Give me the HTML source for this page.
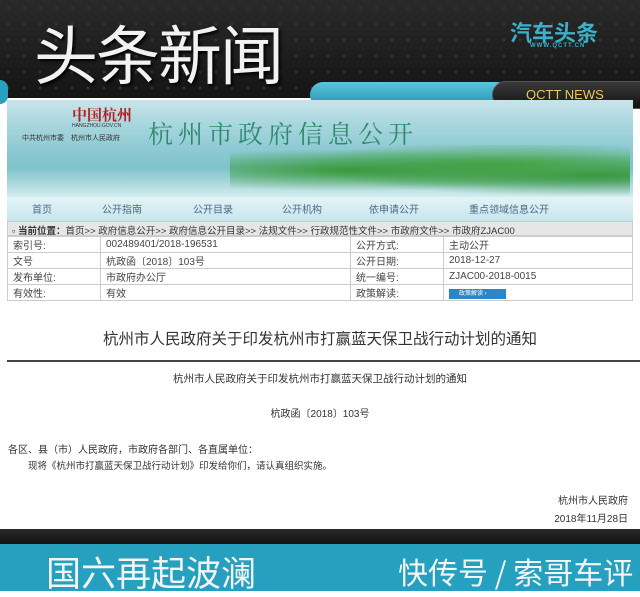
<!DOCTYPE html><html><head><meta charset="utf-8"><style>
*{margin:0;padding:0;box-sizing:border-box}
body{width:640px;height:591px;overflow:hidden;background:#fff;position:relative;font-family:"Liberation Sans","Noto Sans CJK SC",sans-serif;color:#333}
.a{position:absolute;white-space:nowrap}
.top{left:0;top:0;width:640px;height:98px;background:radial-gradient(#3a3a3a 1px,transparent 1.5px) 0 0/16px 16px,linear-gradient(#2a2a2a,#151515)}
.t td{border:1px solid #ccc;font-size:10px;padding-left:5px;height:16px;color:#444}
</style></head><body>
<div class="a top"></div>
<div class="a" style="left:0;top:80px;width:8px;height:24px;background:#2aa0c0;border-radius:0 10px 10px 0"></div>
<div class="a" style="left:34px;top:6px;font-size:64px;color:#f2f2f2;letter-spacing:-2px;font-family:'Noto Sans CJK SC',sans-serif;text-shadow:2px 2px 3px #000">头条新闻</div>
<div class="a" style="left:510px;top:16px;font-size:22px;color:#3cb0c8;font-weight:bold">汽车头条</div>
<div class="a" style="left:530px;top:43px;font-size:6px;color:#3cb0c8;font-weight:bold;letter-spacing:1px">WWW.QCTT.CN</div>
<div class="a" style="left:310px;top:82px;width:200px;height:26px;background:linear-gradient(#5cc6de,#1f8fac);border-radius:13px"></div>
<div class="a" style="left:492px;top:81px;width:150px;height:28px;background:linear-gradient(#3a3a3a,#111);border-radius:14px 0 0 14px;border:1px solid #555"></div>
<div class="a" style="left:526px;top:87px;font-size:13px;color:#e8c860">QCTT NEWS</div>
<div class="a" style="left:7px;top:100px;width:626px;height:97px;background:linear-gradient(180deg,#c8e4ea 0%,#a9d6de 25%,#8ecad4 50%,#7ec3c9 70%,#d4ecef 100%)"></div>
<div class="a" style="left:230px;top:145px;width:400px;height:50px;background:radial-gradient(ellipse at 30% 50%,#3a9a3a,transparent 60%),radial-gradient(ellipse at 70% 40%,#4aa84a,transparent 55%),radial-gradient(ellipse at 90% 60%,#2e8e3a,transparent 50%)"></div>
<div class="a" style="left:72px;top:104px;font-size:15px;color:#b02020;font-family:'Noto Serif CJK SC',serif;font-weight:bold">中国杭州</div>
<div class="a" style="left:72px;top:123px;font-size:5px;color:#333">HANGZHOU.GOV.CN</div>
<div class="a" style="left:22px;top:133px;font-size:7px;color:#333">中共杭州市委　杭州市人民政府</div>
<div class="a" style="left:148px;top:115px;font-size:25px;color:#2e8a6e;font-family:'Noto Serif CJK SC',serif;letter-spacing:5px">杭州市政府信息公开</div>
<div class="a" style="left:7px;top:197px;width:626px;height:24px;background:linear-gradient(#e4f4f6,#c6e6ec)"></div>
<div class="a" style="top:201px;font-size:10px;color:#4a6a86;left:0;width:640px">
<span class="a" style="left:32px">首页</span><span class="a" style="left:102px">公开指南</span><span class="a" style="left:193px">公开目录</span><span class="a" style="left:282px">公开机构</span><span class="a" style="left:369px">依申请公开</span><span class="a" style="left:469px">重点领域信息公开</span></div>
<div class="a" style="left:7px;top:221px;width:626px;height:15px;background:#e6e6e6;border:1px solid #ccc;font-size:9.5px;padding:1px 0 0 4px;color:#333">▫ <b>当前位置：</b>首页>> 政府信息公开>> 政府信息公开目录>> 法规文件>> 行政规范性文件>> 市政府文件>> 市政府ZJAC00</div>
<table class="a t" style="left:7px;top:236px;width:626px;border-collapse:collapse">
<tr><td style="width:93px">索引号:</td><td style="width:250px">002489401/2018-196531</td><td style="width:93px">公开方式:</td><td>主动公开</td></tr>
<tr><td>文号</td><td>杭政函〔2018〕103号</td><td>公开日期:</td><td>2018-12-27</td></tr>
<tr><td>发布单位:</td><td>市政府办公厅</td><td>统一编号:</td><td>ZJAC00-2018-0015</td></tr>
<tr><td>有效性:</td><td>有效</td><td>政策解读:</td><td><span style="display:inline-block;width:57px;height:10px;background:#2a86c8;color:#fff;font-size:6px;padding-left:10px;line-height:10px">政策解读 ›</span></td></tr>
</table>
<div class="a" style="left:0;width:640px;text-align:center;top:327px;font-size:15.5px;color:#333">杭州市人民政府关于印发杭州市打赢蓝天保卫战行动计划的通知</div>
<div class="a" style="left:7px;top:360px;width:633px;height:2px;background:#444"></div>
<div class="a" style="left:0;width:640px;text-align:center;top:371px;font-size:10.5px">杭州市人民政府关于印发杭州市打赢蓝天保卫战行动计划的通知</div>
<div class="a" style="left:0;width:640px;text-align:center;top:405px;font-size:10px">杭政函〔2018〕103号</div>
<div class="a" style="left:8px;top:441px;font-size:10px">各区、县（市）人民政府，市政府各部门、各直属单位：</div>
<div class="a" style="left:28px;top:458px;font-size:9.5px">现将《杭州市打赢蓝天保卫战行动计划》印发给你们，请认真组织实施。</div>
<div class="a" style="right:12px;top:492px;font-size:10px">杭州市人民政府</div>
<div class="a" style="right:12px;top:510px;font-size:10px">2018年11月28日</div>
<div class="a" style="left:0;top:529px;width:640px;height:16px;background:linear-gradient(#2a2a2a,#111)"></div>
<div class="a" style="left:0;top:544px;width:640px;height:47px;background:#26a0bf"></div>
<div class="a" style="left:46px;top:546px;font-size:35px;color:#f4f4f4;font-family:'Noto Sans CJK SC',sans-serif">国六再起波澜</div>
<div class="a" style="left:398px;top:549px;font-size:30px;color:#f4f4f4;font-family:'Noto Sans CJK SC',sans-serif">快传号 / 索哥车评</div>
</body></html>
